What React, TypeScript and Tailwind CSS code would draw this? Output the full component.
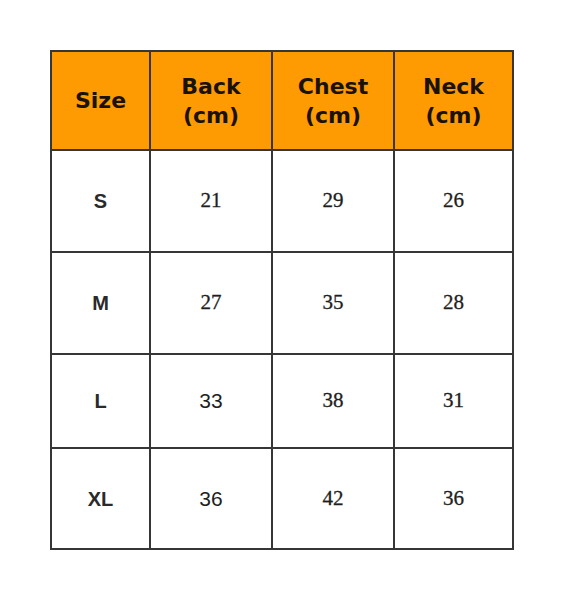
const headers = ["Size", "Back", "Chest", "Neck"];

const rows = [
  { size: "S", back: "21", chest: "29", neck: "26", sansBack: false },
  { size: "M", back: "27", chest: "35", neck: "28", sansBack: false },
  { size: "L", back: "33", chest: "38", neck: "31", sansBack: true },
  { size: "XL", back: "36", chest: "42", neck: "36", sansBack: true },
];

const serif = "font-['Liberation_Serif','Times_New_Roman',serif] [-webkit-text-stroke:0.3px_#1e1e1e]";
const sans = "font-['Liberation_Sans',Arial,sans-serif]";

export default function App() {
  return (
    <div className="w-[578px] h-[600px] bg-white pt-[50px] pl-[50px]">
      <div className="w-[464px] grid grid-cols-[97px_120px_120px_117px] grid-rows-[97px_100px_100px_92px_99px] gap-[2px] p-[2px] bg-[#363636]">
        {headers.map((h, i) => (
          <div
            key={h}
            className="bg-[#fe9a02] flex flex-col items-center justify-center text-[#1a1206] font-bold text-[22px] leading-[29px] font-['DejaVu_Sans',Verdana,sans-serif]"
          >
            <span>{h}</span>
            {i > 0 && <span>(cm)</span>}
          </div>
        ))}
        {rows.map((r) => (
          <div key={r.size} className="contents">
            <div className={`bg-white flex items-center justify-center text-[20px] font-bold text-[#2a2a2a] ${sans}`}>
              {r.size}
            </div>
            <div className={`bg-white flex items-center justify-center text-[21px] text-[#1e1e1e] ${r.sansBack ? sans : serif}`}>
              {r.back}
            </div>
            <div className={`bg-white flex items-center justify-center text-[21px] text-[#1e1e1e] ${serif}`}>
              {r.chest}
            </div>
            <div className={`bg-white flex items-center justify-center text-[21px] text-[#1e1e1e] ${serif}`}>
              {r.neck}
            </div>
          </div>
        ))}
      </div>
    </div>
  );
}
